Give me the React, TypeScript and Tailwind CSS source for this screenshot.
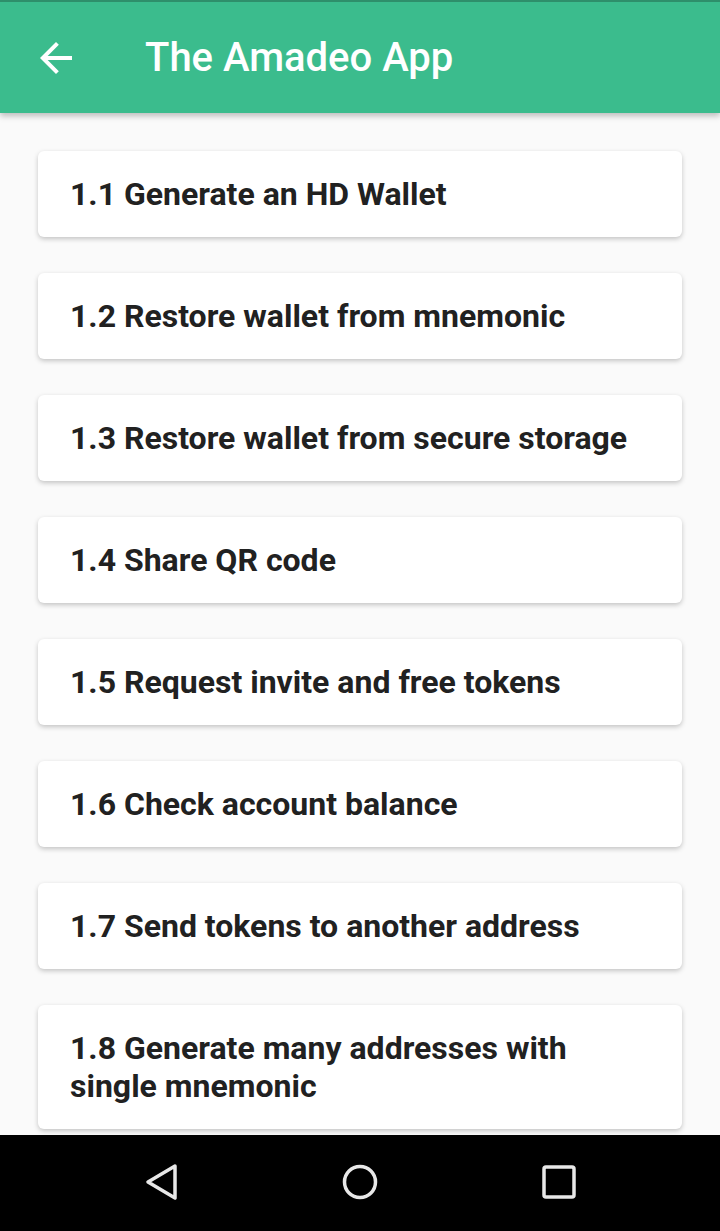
import React from "react";

const items = [
  "1.1 Generate an HD Wallet",
  "1.2 Restore wallet from mnemonic",
  "1.3 Restore wallet from secure storage",
  "1.4 Share QR code",
  "1.5 Request invite and free tokens",
  "1.6 Check account balance",
  "1.7 Send tokens to another address",
  "1.8 Generate many addresses with single mnemonic",
];

export default function App() {
  return (
    <div
      className="w-[720px] h-[1231px] flex flex-col bg-[#fafafa] overflow-hidden"
      style={{ fontFamily: "Roboto, 'Noto Sans', sans-serif" }}
    >
      <div className="relative z-10 h-[113px] shrink-0 bg-[#3bbc8d] border-t-2 border-[#2e8f6b] flex items-center shadow-[0_3px_6px_rgba(0,0,0,0.25)]">
        <div className="w-[112px] flex justify-center">
          <svg width="48" height="48" viewBox="0 0 24 24" className="-ml-[1px]">
            <path d="M20 11H7.83l5.59-5.59L12 4l-8 8 8 8 1.41-1.41L7.83 13H20v-2z" fill="#ffffff" />
          </svg>
        </div>
        <div className="ml-[33px] text-white text-[40px] font-medium leading-none">
          The Amadeo App
        </div>
      </div>
      <div className="flex-1 overflow-hidden px-[38px] pt-[38px] flex flex-col gap-[36px]">
        {items.map((t) => (
          <div
            key={t}
            className="bg-white rounded-[6px] shadow-[0_2px_5px_rgba(0,0,0,0.22)] pl-[32px] pr-[33px] py-[24px] text-[32px] leading-[38px] font-bold text-[#212121] shrink-0"
          >
            {t}
          </div>
        ))}
      </div>
      <div className="h-[96px] shrink-0 bg-black flex items-center justify-center">
        <div className="flex items-center justify-between w-[434px] -mt-[2px]">
          <svg width="36" height="40" viewBox="0 0 36 40">
            <path d="M32 4 L5 20 L32 36 Z" fill="none" stroke="#e8e8e8" strokeWidth="3.5" strokeLinejoin="round" />
          </svg>
          <svg width="38" height="38" viewBox="0 0 38 38">
            <circle cx="19" cy="19" r="15.5" fill="none" stroke="#e8e8e8" strokeWidth="3.5" />
          </svg>
          <svg width="36" height="36" viewBox="0 0 36 36">
            <rect x="3" y="3" width="30" height="30" rx="2" fill="none" stroke="#e8e8e8" strokeWidth="3.5" />
          </svg>
        </div>
      </div>
    </div>
  );
}
